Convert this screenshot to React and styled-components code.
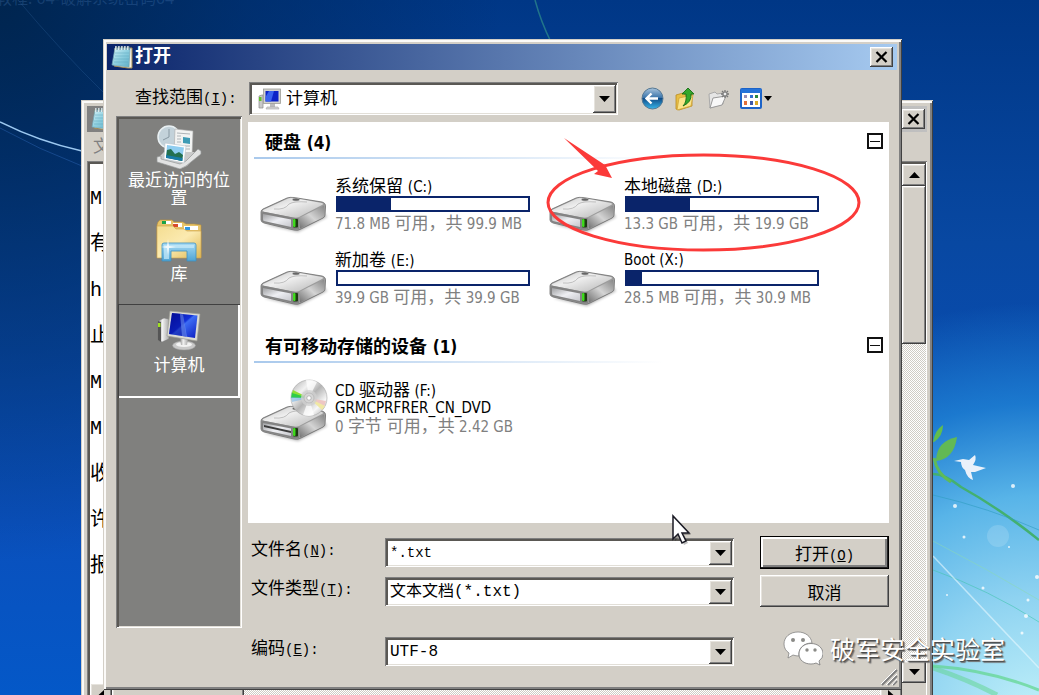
import React, { useState } from "react";
import styled, { createGlobalStyle, css } from "styled-components";

const GlobalStyle = createGlobalStyle`
  * {
    box-sizing: border-box;
  }
  body {
    margin: 0;
    font-family: "Liberation Mono", "Noto Sans CJK SC", monospace;
    font-size: 17px;
    color: #000;
  }
  button, input, select, textarea {
    font: inherit;
    color: inherit;
    margin: 0;
    padding: 0;
    border: 0;
    border-radius: 0;
    outline: none;
  }
`;

const raised = css`
  background: #d3cfc7;
  box-shadow: inset -1px -1px #404040, inset 1px 1px #fff,
    inset -2px -2px #808080, inset 2px 2px #e6e3dd;
`;

const sunken = css`
  box-shadow: inset 1px 1px #808080, inset -1px -1px #fff,
    inset 3px 3px #5a5854, inset -2px -2px #e2dfd8;
`;

const hatch = css`
  background: repeating-conic-gradient(#fff 0 25%, #cfccc4 0 50%) 0 0 / 2px 2px;
`;

const Desktop = styled.main`
  position: relative;
  height: 100vh;
  min-height: 695px;
  overflow: hidden;
  background: radial-gradient(
      ellipse 430px 420px at 100% 104%,
      #c4f3fa 0%,
      #8fd3f1 30%,
      #58b4e8 54%,
      rgba(32, 132, 214, 0.8) 76%,
      rgba(16, 100, 200, 0) 100%
    ),
    radial-gradient(
      ellipse 500px 560px at 0% 0%,
      #00254f 0%,
      rgba(0, 42, 96, 0.6) 50%,
      rgba(0, 60, 140, 0) 100%
    ),
    linear-gradient(180deg, #003786 0%, #0848a2 35%, #0a50bc 75%, #0458c8 100%);
`;

const Wallpaper = styled.svg`
  position: absolute;
  top: 0;
  ${(props) => (props.$right ? "right: 0;" : "left: 0;")}
`;

const FadedTitle = styled.div`
  position: absolute;
  left: -4px;
  top: -14px;
  font-size: 16px;
  line-height: 24px;
  font-family: "Noto Sans", "Noto Sans CJK SC", sans-serif;
  color: rgba(90, 140, 200, 0.25);
`;

const Frame = styled.section`
  position: absolute;
  display: flex;
  flex-direction: column;
  background: #d3cfc7;
  padding: 5px 5px 4px 4px;
  box-shadow: inset 1px 1px #d3cfc7, inset -1px -1px #404040,
    inset 3px 3px #fbfaf8, inset -3px -3px #808080;
`;

const NotepadFrame = styled(Frame)`
  left: 81px;
  right: 106px;
  top: 100px;
  bottom: -20px;
  padding: 6px;
`;

const DialogFrame = styled(Frame)`
  left: 103px;
  right: 137px;
  top: 39px;
`;

const TitleBar = styled.header`
  display: flex;
  align-items: center;
  height: 26px;
  padding: 0 ${(props) => (props.$inactive ? "2px" : "4px")} 0 4px;
  background: ${(props) =>
    props.$inactive
      ? "linear-gradient(90deg, #808080, #c0c0c0)"
      : "linear-gradient(90deg, #0a246a, #a6caf0)"};
`;

const Title = styled.h1`
  flex: 1;
  margin: 0 0 0 2px;
  color: #fff;
  font-size: 18px;
  line-height: 26px;
  font-weight: 700;
`;

const CloseButton = styled.button`
  ${raised}
  display: grid;
  place-items: center;
  width: 23px;
  height: 20px;
`;

const NotepadMenu = styled.nav`
  height: 29px;
  padding-left: 6px;
  line-height: 32px;
  color: #808080;
`;

const NotepadBody = styled.div`
  ${sunken}
  flex: 1;
  display: grid;
  grid-template-columns: 1fr 24px;
  grid-template-rows: 1fr 24px;
  padding: 3px 1px 2px 3px;
  background: #fff;
`;

const NotepadText = styled.textarea`
  resize: none;
  background: #fff;
  padding: 12px 0;
  font-size: 20px;
  line-height: 46px;
  overflow: hidden;
`;

const Scrollbar = styled.div`
  ${hatch}
  display: flex;
  flex-direction: ${(props) => (props.$vertical ? "column" : "row")};
`;

const ScrollButton = styled.button`
  ${raised}
  display: grid;
  place-items: center;
  flex: 0 0 22px;
`;

const ScrollThumb = styled.div`
  ${raised}
  flex: 0 0 ${(props) => props.$length};
`;

const ScrollTrack = styled.div`
  flex: 1;
`;

const Corner = styled.div`
  background: #d3cfc7;
`;

const Toolbar = styled.div`
  display: flex;
  align-items: center;
  height: 46px;
  padding: 11px 8px 0 28px;
`;

const LookInLabel = styled.label`
  flex: 0 0 114px;
  padding-bottom: 6px;
`;

const Latin = styled.span`
  font-size: 14px;
`;

const ComboBox = styled.div`
  ${sunken}
  display: flex;
  align-items: center;
  height: ${(props) => (props.$tall ? "33px" : "29px")};
  padding: 3px 2px 2px 5px;
  background: #fff;
`;

const LookInCombo = styled(ComboBox)`
  flex: 1;
  padding-left: 9px;
  gap: 5px;
`;

const comboText = css`
  flex: 1;
  min-width: 0;
  width: 100%;
  height: 100%;
  background: transparent;
  font-size: 16px;
`;

const ComboSelect = styled.select`
  ${comboText}
  appearance: none;
  font-size: ${(props) => (props.$tall ? "17px" : "16px")};
`;

const ComboInput = styled.input`
  ${comboText}
  font-size: 14px;
`;

const ComboArrow = styled.span`
  ${raised}
  display: grid;
  place-items: center;
  align-self: stretch;
  flex: 0 0 23px;
`;

const ToolGroup = styled.div`
  display: flex;
  align-items: center;
  gap: 9px;
  flex: 0 0 271px;
  padding-left: 23px;
`;

const ToolButton = styled.button`
  display: flex;
  align-items: center;
  gap: 2px;
  min-width: 24px;
  height: 26px;
  background: none;
`;

const DialogBody = styled.div`
  display: flex;
  align-items: flex-start;
  gap: 6px;
  padding: 0 8px 20px 9px;
`;

const Places = styled.nav`
  ${sunken}
  flex: 0 0 126px;
  height: 512px;
  padding: 3px 2px;
  background: #80807e;
`;

const Place = styled.button`
  display: flex;
  flex-direction: column;
  align-items: center;
  width: 100%;
  min-height: ${(props) => (props.$selected ? "94px" : "91px")};
  padding: 6px 8px 4px;
  background: none;
  color: #fff;
  line-height: 18px;
  ${(props) =>
    props.$selected &&
    css`
      box-shadow: inset 1px 1px #404040, inset -2px -2px #fff;
    `}
`;

const PlaceIcon = styled.span`
  height: 48px;
`;

const Main = styled.div`
  flex: 1;
  min-width: 0;
  padding-top: 6px;
`;

const FileList = styled.div`
  height: 401px;
  background: #fff;
  padding: 0 6px;
  font-family: "DejaVu Sans Condensed", "Noto Sans CJK SC", sans-serif;
`;

const GroupHeader = styled.div`
  display: flex;
  align-items: flex-start;
  justify-content: space-between;
  height: 37px;
  padding: 9px 0 0 11px;
  background: linear-gradient(90deg, #a9c9ec, #dce9f7 60%, #fff) 0 100% / 410px
    2px no-repeat;
`;

const GroupTitle = styled.h2`
  margin: 0;
  font-size: 18px;
  line-height: 24px;
  font-weight: 700;
`;

const Count = styled.span`
  font-size: 17px;
`;

const Toggle = styled.button`
  width: 16px;
  height: 16px;
  margin-top: 2px;
  border: 2px solid #111;
  background: linear-gradient(#111, #111) 50% 50% / 10px 1px no-repeat #fff;
`;

const DriveGrid = styled.div`
  display: grid;
  grid-template-columns: repeat(auto-fill, 289px);
  grid-auto-rows: 74px;
  padding: 18px 0 1px 6px;
`;

const Drive = styled.article`
  display: flex;
  gap: 9px;
`;

const DriveText = styled.div`
  font-size: 15px;
  line-height: 18px;
  white-space: nowrap;
`;

const Cjk = styled.span`
  font-size: 17px;
`;

const DriveLine = styled.div`
  height: 18px;
`;

const Free = styled(DriveLine)`
  color: #808080;
  margin-top: ${(props) => (props.$afterBar ? "2px" : "0")};
`;

const CapacityBar = styled.div`
  width: 194px;
  height: 16px;
  margin: 1px 0 0 1px;
  border: 2px solid #0a246a;
`;

const CapacityFill = styled.div`
  height: 100%;
  background: #0a246a;
`;

const Form = styled.form`
  display: grid;
  grid-template-columns: 134px 1fr 129px;
  grid-template-rows: 33px 32px 53px;
  row-gap: 6px;
  align-items: center;
  padding: 13px 0 0 3px;
`;

const Field = styled.div`
  display: contents;
`;

const FieldLabel = styled.label`
  padding-bottom: 3px;
  line-height: 26px;
  ${(props) => props.$apart && "align-self: end;"}
`;

const FieldCombo = styled(ComboBox)`
  margin-right: 26px;
  ${(props) => props.$apart && "align-self: end;"}
`;

const PushButton = styled.button`
  ${raised}
  align-self: stretch;
  ${(props) =>
    props.$default &&
    css`
      border: 1px solid #000;
      box-shadow: inset -1px -1px #222, inset 2px 2px #fff,
        inset -3px -3px #808080;
    `}
`;

const Grip = styled.svg`
  position: absolute;
  right: 4px;
  bottom: 4px;
`;

const Overlay = styled.svg`
  position: absolute;
  left: ${(props) => props.$left}px;
  top: ${(props) => props.$top}px;
  pointer-events: none;
`;

const Watermark = styled.div`
  position: absolute;
  right: 34px;
  top: 629px;
  display: flex;
  align-items: center;
  gap: 7px;
  color: #fff;
  font-family: "Noto Sans CJK SC", sans-serif;
  font-size: 25px;
  line-height: 38px;
  text-shadow: 1px 1px 1px #444, 2px 2px 1px #777;
`;

const Down = () => (
  <svg width="11" height="6" viewBox="0 0 11 6">
    <path d="M0 0H11L5.5 6Z" fill="#000" />
  </svg>
);

const Up = () => (
  <svg width="11" height="6" viewBox="0 0 11 6">
    <path d="M0 6H11L5.5 0Z" fill="#000" />
  </svg>
);

const Side = ({ left }) => (
  <svg width="6" height="11" viewBox="0 0 6 11">
    <path d={left ? "M6 0V11L0 5.5Z" : "M0 0V11L6 5.5Z"} fill="#000" />
  </svg>
);

const Cross = () => (
  <svg width="13" height="12" viewBox="0 0 13 12">
    <path d="M1.5 1L11.5 11M11.5 1L1.5 11" stroke="#000" strokeWidth="2.2" />
  </svg>
);

const NotepadIcon = () => (
  <svg width="22" height="24" viewBox="0 0 22 24">
    <defs>
      <linearGradient id="pad" x1="0" y1="0" x2="1" y2="1">
        <stop offset="0" stopColor="#d8f3f8" />
        <stop offset=".5" stopColor="#8fd0e0" />
        <stop offset="1" stopColor="#5eaec6" />
      </linearGradient>
    </defs>
    <path d="M4 3H21V23H17L3 21Z" fill="#f4f0e0" stroke="#a58b50" />
    <path d="M4 3H19L18 22L1 20Z" fill="url(#pad)" stroke="#6fa3b4" strokeWidth=".7" />
    <path d="M4 8H18M4 11H18M3 14H18M3 17H17" stroke="#5fa6bd" strokeWidth=".5" />
    <path d="M5 1V5M8 1V5M11 1V5M14 1V5M17 1V5" stroke="#e8eef0" strokeWidth="1.6" />
    <path d="M6 1V5M9 1V5M12 1V5M15 1V5M18 1V5" stroke="#456a78" strokeWidth=".7" />
  </svg>
);

const ComputerIcon = () => (
  <svg width="44" height="42" viewBox="0 0 44 42">
    <defs>
      <linearGradient id="screen" x1="0" y1="0" x2="1" y2="1">
        <stop offset="0" stopColor="#0512a0" />
        <stop offset=".45" stopColor="#1230d8" />
        <stop offset=".5" stopColor="#3d6cf4" />
        <stop offset="1" stopColor="#0b1cc0" />
      </linearGradient>
      <linearGradient id="metal" x1="0" y1="0" x2="1" y2="0">
        <stop offset="0" stopColor="#8c8c8c" />
        <stop offset=".4" stopColor="#f2f2f2" />
        <stop offset="1" stopColor="#a8a8a8" />
      </linearGradient>
    </defs>
    <path d="M1 11L7 8L12 9V29L5 32L1 30Z" fill="url(#metal)" stroke="#777" strokeWidth=".5" />
    <path d="M1 11L4 12V32L1 30Z" fill="#555" />
    <rect x="1" y="13" width="2.5" height="4" fill="#9fe020" />
    <ellipse cx="27" cy="35.5" rx="11.5" ry="4.5" fill="#c9c9c9" stroke="#9a9a9a" strokeWidth=".5" />
    <ellipse cx="27" cy="34.5" rx="8" ry="2.5" fill="#f2f2f2" />
    <path d="M23 27L31 29L30 35H24Z" fill="url(#metal)" />
    <path d="M13 1L43 4L40 31L10 26Z" fill="#dcdcd6" stroke="#9c9c94" strokeWidth=".7" />
    <path d="M15 3L40.5 5.5L38 28L12 24Z" fill="url(#screen)" />
    <path d="M15 3L26 4L29 26.5L12 24Z" fill="#02078c" opacity=".45" />
    <path d="M23 4L26 4.3L30 26.7L25 26Z" fill="#7ba4ff" opacity=".5" />
  </svg>
);

const SmallComputerIcon = () => (
  <svg width="23" height="22" viewBox="0 0 23 22">
    <path d="M1 8L4 7H5V20H1Z" fill="#c9c9c9" stroke="#8a8a8a" strokeWidth=".7" />
    <rect x="1" y="9" width="2.5" height="4" fill="#5fc02a" />
    <path d="M12 15H17V19H12Z" fill="#bdbdbd" />
    <path d="M9 19H20L21 21H8Z" fill="#d5d5d5" stroke="#a5a5a5" strokeWidth=".6" />
    <rect x="5.5" y="1" width="17" height="14.5" fill="#d2d2ce" stroke="#9d9d98" strokeWidth=".8" />
    <rect x="7.500" y="3" width="13" height="10.500" fill="#0d24c8" />
    <path d="M11 3H16L13 13.500H7.500V9Z" fill="#3a63ef" />
  </svg>
);

const RecentIcon = () => (
  <svg width="46" height="44" viewBox="0 0 46 44">
    <circle cx="13" cy="12" r="11" fill="#c3d2da" stroke="#e9f0f3" strokeWidth="1.5" />
    <path d="M13 4V12L7 15" stroke="#8798a2" fill="none" />
    <path d="M19 4L37 6L36 31L18 28Z" fill="#f2f3f2" stroke="#aaa" strokeWidth=".6" />
    <path d="M21 8L34 9M21 11H25M21 14H25M21 17H25M29 21H34M28 24H34" stroke="#aeb4b8" strokeWidth="1" />
    <path d="M27 12L34 13V19L27 18Z" fill="#3e9bb5" />
    <path d="M3 32L8 27L39 27L45 26L31 41L24 44L1 36Z" fill="#c9caca" />
    <path d="M1 32L5 31V34L24 39L30 36L42 24L45 26V29L30 41L24 44L1 37Z" fill="#e2e3e3" stroke="#949696" strokeWidth=".7" />
    <path d="M9 18L30 21L28 38L8 34Z" fill="#fff" stroke="#b8c5cc" strokeWidth=".6" />
    <path d="M11 20L28 22.5L26 36L10 32.5Z" fill="#8fcdf0" />
    <path d="M11 25L15 24L19 29L23 27L27 30L26 36L10 32.5Z" fill="#24704f" />
    <path d="M10 30L26.5 33V36L10 33Z" fill="#187ba5" />
  </svg>
);

const LibraryIcon = () => (
  <svg width="46" height="44" viewBox="0 0 46 44">
    <defs>
      <linearGradient id="folder" x1="0" y1="0" x2="1" y2="1">
        <stop offset="0" stopColor="#f4dd91" />
        <stop offset=".5" stopColor="#fbeab0" />
        <stop offset="1" stopColor="#dfb853" />
      </linearGradient>
      <linearGradient id="stand" x1="0" y1="0" x2="0" y2="1">
        <stop offset="0" stopColor="#a8dbf4" />
        <stop offset="1" stopColor="#4fa4d4" />
      </linearGradient>
    </defs>
    <path d="M2 3L4 1H16L18 3H27L30 5H38L45 6V38H1V6Z" fill="#e7c46a" stroke="#bc9238" strokeWidth=".6" />
    <path d="M6 2H15V5H6Z M17 4H26V8H17Z M28 7H42V11H28Z" fill="#fff" />
    <path d="M6 2H10V5H6Z" fill="#18a347" />
    <path d="M17 5H22V8H17Z" fill="#d94b2c" />
    <path d="M29 8H34V11H29Z" fill="#2f96e0" />
    <path d="M1 7H17L20 10H28L31 12H45V39H1Z" fill="url(#folder)" stroke="#cda34a" strokeWidth=".6" />
    <path d="M6 26Q6 24 8 24H38Q40 24 40 26V42H31V32H15V42H6Z" fill="url(#stand)" stroke="#3c8fbf" strokeWidth=".8" />
    <path d="M8 26H38V29H13V40H8Z" fill="#c9ebfa" opacity=".7" />
    <path d="M12 20L13 27L20 28L13 29L12 36L11 29L5 28L11 27Z" fill="#fff" opacity=".8" />
  </svg>
);

const DriveIcon = ({ disc }) => (
  <svg width="66" height="64" viewBox="0 0 66 64" overflow="visible">
    <defs>
      <linearGradient id="driveTop" x1="0" y1="0" x2="1" y2="1">
        <stop offset="0" stopColor="#c4c4c4" />
        <stop offset=".4" stopColor="#efefef" />
        <stop offset="1" stopColor="#b5b5b5" />
      </linearGradient>
      <linearGradient id="driveFront" x1="0" y1="0" x2="1" y2="1">
        <stop offset="0" stopColor="#9fa0a2" />
        <stop offset=".5" stopColor="#eeeff3" />
        <stop offset="1" stopColor="#c6c7cc" />
      </linearGradient>
      <linearGradient id="driveSide" x1="0" y1="1" x2="1" y2="0">
        <stop offset="0" stopColor="#6f6f6f" />
        <stop offset=".5" stopColor="#d4d4d4" />
        <stop offset="1" stopColor="#858585" />
      </linearGradient>
      <linearGradient id="discFace" x1="0" y1="0" x2="1" y2="1">
        <stop offset="0" stopColor="#a9a9a9" />
        <stop offset=".3" stopColor="#f2f2f2" />
        <stop offset=".5" stopColor="#b4b4b4" />
        <stop offset=".75" stopColor="#f7f7f7" />
        <stop offset="1" stopColor="#a0a0a0" />
      </linearGradient>
      <filter id="soft" x="-20%" y="-50%" width="140%" height="200%">
        <feGaussianBlur stdDeviation="1.5" />
      </filter>
    </defs>
    <g transform={disc ? "translate(0 21)" : "translate(0 16)"}>
      <path d="M4 31L38 39L67 24L64 20L30 30Z" fill="#000" opacity=".3" filter="url(#soft)" />
      <path d="M1 19Q1 17 3 16L27 5Q30 4 34 4.5L62 9Q66 10 65.5 14L65 22Q65 24 63 25L41 36Q38 38 34 37L4 30Q1 29 1 27Z" fill="#9c9c9c" stroke="#6d6d6d" strokeWidth=".8" />
      <path d="M3 17L28 5.5Q31 4.5 34 5L62 10Q64 11 62 12L39 24Q36 25 33 24.5L5 19Q2 18 3 17Z" fill="url(#driveTop)" />
      <path d="M39 25L64 12.5L64.5 22Q64.5 24 62 25L40 35.5Z" fill="url(#driveSide)" />
      <path d="M1.5 20Q2 18.5 5 19L33 24.5Q36 25 38.5 25L39 36Q36 37 33 36L4 29.5Q1.5 29 1.5 26Z" fill="#838383" />
      <path d="M3 21L31 26.5V34L4 28Q3 28 3 26Z" fill="url(#driveFront)" />
      <path d="M14 16Q25 17 29 11Q34 8 47 9" fill="none" stroke="#aaa" strokeWidth=".7" />
      <ellipse cx="36" cy="6.5" rx="3.5" ry="1.5" fill="#666" stroke="#bbb" strokeWidth=".6" />
      {disc && <path d="M4 23L31 29V31L4 25Z" fill="#3c3c3c" />}
      <rect x="33" y="26" width="5" height="8.5" rx="1" fill="#1e3a13" />
      <rect x="33" y="26" width="2.5" height="8" rx="1" fill="#3fdb1c" />
    </g>
    {disc && (
      <g>
        <circle cx="49" cy="17" r="18" fill="url(#discFace)" stroke="#a5a5a5" strokeWidth=".6" />
        <path d="M49 17L46 -1A18 18 0 0 1 57 1Z M49 17L43 34A18 18 0 0 0 54 34Z" fill="#fff" opacity=".75" />
        <path d="M49 17L32 11L31 17Z" fill="#30cc48" />
        <path d="M49 17L33 9L32 12Z" fill="#8ee034" />
        <path d="M49 17L31 16L32 21Z" fill="#78b5e8" opacity=".6" />
        <path d="M49 17L66 20L64 26Z" fill="#eec7c4" />
        <path d="M49 17L65 25L62 29Z" fill="#f0e8a4" />
        <circle cx="49" cy="17" r="8" fill="#d0d0d0" opacity=".8" />
        <circle cx="49" cy="17" r="5" fill="#d6d6d6" stroke="#b2b2b2" strokeWidth=".7" />
        <circle cx="49" cy="17" r="2.2" fill="#fff" stroke="#999" strokeWidth=".6" />
      </g>
    )}
  </svg>
);

const BackIcon = () => (
  <svg width="23" height="23" viewBox="0 0 23 23">
    <defs>
      <linearGradient id="ball" x1="0" y1="0" x2="0" y2="1">
        <stop offset="0" stopColor="#a9c4dc" />
        <stop offset=".45" stopColor="#3c76ac" />
        <stop offset=".5" stopColor="#104c88" />
        <stop offset="1" stopColor="#38b6ea" />
      </linearGradient>
    </defs>
    <circle cx="11.5" cy="11.5" r="10.5" fill="url(#ball)" stroke="#557893" />
    <path d="M10.500 6.500L5.500 11.500L10.500 16.500M6 11.500H17" fill="none" stroke="#fff" strokeWidth="2.400" />
  </svg>
);

const UpFolderIcon = () => (
  <svg width="22" height="24" viewBox="0 0 22 24">
    <path d="M2 8L9 6L11 8L18 7V19L5 23L2 22Z" fill="#e8bf45" stroke="#b98c22" strokeWidth=".8" />
    <path d="M5 11L19 8L17 19L3 23Z" fill="#fbe48a" stroke="#cfa338" strokeWidth=".8" />
    <path d="M9 19Q13 15 12 7H8L14 1L20 7H17Q18 15 9 19Z" fill="#35a82b" stroke="#176d16" strokeWidth=".9" />
  </svg>
);

const NewFolderIcon = () => (
  <svg width="24" height="22" viewBox="0 0 24 22">
    <path d="M2 6L8 4L10 6L16 5V16L3 20Z" fill="#e5e5e5" stroke="#aaa" />
    <path d="M6 10L19 8L15 17L3 20Z" fill="#f8f8f8" stroke="#999" />
    <path d="M18 2V10M14 6H22M15 3L21 9M21 3L15 9" stroke="#777" strokeWidth="1.300" />
    <circle cx="18" cy="6" r="2" fill="#eee" stroke="#777" />
  </svg>
);

const ViewsIcon = () => (
  <svg width="22" height="21" viewBox="0 0 22 21">
    <rect x="1" y="1" width="20" height="19" rx="1" fill="#fff" stroke="#1c63c8" strokeWidth="2" />
    <rect x="1" y="1" width="20" height="4" fill="#2473d8" />
    <path d="M4 7H7V10H4Z" fill="#9a8fb5" />
    <path d="M10 7H13V10H10Z" fill="#2f6fd0" />
    <path d="M15 7H18V10H15Z" fill="#2b8a3e" />
    <path d="M4 13H7V17H4Z" fill="#e2703a" />
    <path d="M10 13H13V17H10Z" fill="#3d58a8" />
    <path d="M15 13H18V17H15Z" fill="#d9a927" />
  </svg>
);

const drives = [
  { name: "系统保留", letter: "(C:)", used: 28, free: "71.8 MB", total: "99.9 MB" },
  { name: "本地磁盘", letter: "(D:)", used: 33, free: "13.3 GB", total: "19.9 GB" },
  { name: "新加卷", letter: "(E:)", used: 0, free: "39.9 GB", total: "39.9 GB" },
  { name: "", letter: "Boot (X:)", used: 8, free: "28.5 MB", total: "30.9 MB" },
];

const noteLines = ["M", "有", "h", "止", "M", "M", "收", "许", "报"].join("\n");

function DriveItem({ drive }) {
  return (
    <Drive>
      <DriveIcon />
      <DriveText>
        <DriveLine>
          {drive.name && <Cjk>{drive.name} </Cjk>}
          {drive.letter}
        </DriveLine>
        <CapacityBar>
          <CapacityFill style={{ width: `${drive.used}%` }} />
        </CapacityBar>
        <Free $afterBar>
          {drive.free} <Cjk>可用，共</Cjk> {drive.total}
        </Free>
      </DriveText>
    </Drive>
  );
}

function Group({ title, count, children }) {
  const [open, setOpen] = useState(true);

  return (
    <section>
      <GroupHeader>
        <GroupTitle>
          {title} <Count>({count})</Count>
        </GroupTitle>
        <Toggle aria-label={title} aria-expanded={open} onClick={() => setOpen(!open)} />
      </GroupHeader>
      {open && <DriveGrid>{children}</DriveGrid>}
    </section>
  );
}

function Notepad() {
  return (
    <NotepadFrame>
      <TitleBar $inactive>
        <NotepadIcon />
        <Title />
        <CloseButton aria-label="关闭">
          <Cross />
        </CloseButton>
      </TitleBar>
      <NotepadMenu>文件</NotepadMenu>
      <NotepadBody>
        <NotepadText aria-label="文本" defaultValue={noteLines} />
        <Scrollbar $vertical>
          <ScrollButton aria-label="向上">
            <Up />
          </ScrollButton>
          <ScrollThumb $length="158px" />
          <ScrollTrack />
          <ScrollButton aria-label="向下">
            <Down />
          </ScrollButton>
        </Scrollbar>
        <Scrollbar>
          <ScrollButton aria-label="向左">
            <Side left />
          </ScrollButton>
          <ScrollThumb $length="132px" />
          <ScrollTrack />
          <ScrollButton aria-label="向右">
            <Side />
          </ScrollButton>
        </Scrollbar>
        <Corner />
      </NotepadBody>
    </NotepadFrame>
  );
}

function OpenDialog() {
  const [fileName, setFileName] = useState("*.txt");

  return (
    <DialogFrame role="dialog" aria-label="打开">
      <TitleBar>
        <NotepadIcon />
        <Title>打开</Title>
        <CloseButton aria-label="关闭">
          <Cross />
        </CloseButton>
      </TitleBar>
      <Toolbar>
        <LookInLabel htmlFor="lookIn">
          查找范围
          <Latin>
            (<u>I</u>):
          </Latin>
        </LookInLabel>
        <LookInCombo $tall>
          <SmallComputerIcon />
          <ComboSelect $tall id="lookIn">
            <option>计算机</option>
          </ComboSelect>
          <ComboArrow>
            <Down />
          </ComboArrow>
        </LookInCombo>
        <ToolGroup>
          <ToolButton aria-label="后退">
            <BackIcon />
          </ToolButton>
          <ToolButton aria-label="向上一级">
            <UpFolderIcon />
          </ToolButton>
          <ToolButton aria-label="新建文件夹">
            <NewFolderIcon />
          </ToolButton>
          <ToolButton aria-label="查看">
            <ViewsIcon />
            <svg width="8" height="5" viewBox="0 0 8 5">
              <path d="M0 0H8L4 5Z" />
            </svg>
          </ToolButton>
        </ToolGroup>
      </Toolbar>
      <DialogBody>
        <Places>
          <Place>
            <PlaceIcon>
              <RecentIcon />
            </PlaceIcon>
            最近访问的位置
          </Place>
          <Place>
            <PlaceIcon>
              <LibraryIcon />
            </PlaceIcon>
            库
          </Place>
          <Place $selected>
            <PlaceIcon>
              <ComputerIcon />
            </PlaceIcon>
            计算机
          </Place>
        </Places>
        <Main>
          <FileList>
            <Group title="硬盘" count={4}>
              {drives.map((drive) => (
                <DriveItem key={drive.letter} drive={drive} />
              ))}
            </Group>
            <Group title="有可移动存储的设备" count={1}>
              <Drive>
                <DriveIcon disc />
                <DriveText>
                  <DriveLine>
                    CD <Cjk>驱动器</Cjk> (F:)
                  </DriveLine>
                  <DriveLine>GRMCPRFRER_CN_DVD</DriveLine>
                  <Free>
                    0 <Cjk>字节 可用，共</Cjk> 2.42 GB
                  </Free>
                </DriveText>
              </Drive>
            </Group>
          </FileList>
          <Form onSubmit={(e) => e.preventDefault()}>
            <Field>
              <FieldLabel htmlFor="fileName">
                文件名
                <Latin>
                  (<u>N</u>):
                </Latin>
              </FieldLabel>
              <FieldCombo>
                <ComboInput
                  id="fileName"
                  value={fileName}
                  onChange={(e) => setFileName(e.target.value)}
                />
                <ComboArrow>
                  <Down />
                </ComboArrow>
              </FieldCombo>
              <PushButton $default type="submit">
                打开
                <Latin>
                  (<u>O</u>)
                </Latin>
              </PushButton>
            </Field>
            <Field>
              <FieldLabel htmlFor="fileType">
                文件类型
                <Latin>
                  (<u>T</u>):
                </Latin>
              </FieldLabel>
              <FieldCombo>
                <ComboSelect id="fileType">
                  <option>文本文档(*.txt)</option>
                </ComboSelect>
                <ComboArrow>
                  <Down />
                </ComboArrow>
              </FieldCombo>
              <PushButton type="button">取消</PushButton>
            </Field>
            <Field>
              <FieldLabel $apart htmlFor="encoding">
                编码
                <Latin>
                  (<u>E</u>):
                </Latin>
              </FieldLabel>
              <FieldCombo $apart>
                <ComboSelect id="encoding">
                  <option>UTF-8</option>
                </ComboSelect>
                <ComboArrow>
                  <Down />
                </ComboArrow>
              </FieldCombo>
            </Field>
          </Form>
        </Main>
      </DialogBody>
      <Grip width="17" height="17" viewBox="0 0 17 17">
        <path d="M1 16L16 1M7 16L16 7M12 16L16 12" stroke="#808080" strokeWidth="2" />
        <path d="M0 15L15 0M5 16L16 5M11 16L16 10" stroke="#fff" strokeWidth="1" />
      </Grip>
    </DialogFrame>
  );
}

function App() {
  return (
    <>
      <GlobalStyle />
      <Desktop>
        <Wallpaper width="600" height="695" viewBox="0 0 600 695" fill="none">
          <path d="M0 122Q40 142 82 151" stroke="#9cc8f0" strokeWidth="1.5" />
          <path d="M0 128Q40 150 82 166" stroke="#2a62b0" opacity=".5" />
          <path d="M18 0Q60 50 103 92" stroke="#3a72b0" opacity=".25" />
          <path d="M535 0Q541 22 551 42" stroke="#2f8f8c" strokeWidth="1.5" opacity=".7" />
        </Wallpaper>
        <Wallpaper $right width="110" height="695" viewBox="0 0 110 695" fill="none">
          <path d="M4 474Q16 474 32 487Q70 508 110 540" stroke="#43b070" strokeWidth="2.5" />
          <path d="M5 458Q8 474 22 482" stroke="#5fbb58" strokeWidth="3" />
          <path d="M4 442Q6 430 14 425Q14 436 5 442Z" fill="#62bd4c" />
          <path d="M7 460Q8 441 28 437Q25 459 7 461Z" fill="#62b954" />
          <path d="M25 461L34 459L40 460L46 455Q48 459 44 465L57 468L46 472L42 472L44 480Q38 478 36 470Q32 467 32 462Z" fill="#eaf1fa" />
          <path d="M4 495Q60 508 110 530" stroke="#2e9cc0" opacity=".6" />
          <path d="M4 541Q60 570 110 600" stroke="#8cdcb0" opacity=".5" />
          <path d="M4 570Q60 590 110 622" stroke="#45c4b0" opacity=".6" />
          <path d="M4 556L110 668" stroke="#e8f8ff" strokeWidth="1.5" opacity=".6" />
          <path d="M4 666Q60 670 110 690" stroke="#5fd68c" strokeWidth="3" opacity=".7" />
          <path d="M4 668Q40 680 68 695" stroke="#5fd68c" strokeWidth="5" opacity=".5" />
          <circle cx="69" cy="536" r="11" fill="#fff" opacity=".15" />
          <g fill="#fff" opacity=".8">
            <circle cx="26" cy="506" r="2" />
            <circle cx="84" cy="486" r="2" />
            <circle cx="35" cy="537" r="1.5" />
            <circle cx="108" cy="577" r="2" />
            <circle cx="97" cy="616" r="2" />
            <circle cx="93" cy="633" r="1.5" />
            <circle cx="54" cy="588" r="1.5" />
            <circle cx="80" cy="547" r="1" />
            <circle cx="18" cy="595" r="1" />
            <circle cx="99" cy="600" r="1.5" />
          </g>
        </Wallpaper>
        <FadedTitle>教程: 04-破解系统密码04</FadedTitle>
        <Notepad />
        <OpenDialog />
        <Overlay $left={540} $top={130} width="330" height="130" viewBox="540 130 330 130">
          <ellipse cx="703.5" cy="202.5" rx="155.5" ry="47.5" fill="none" stroke="#fb3a39" strokeWidth="3" />
          <path d="M564 138L605 165L603 161L612 178L594 174L598 171Z" fill="#fb3a39" />
        </Overlay>
        <Overlay $left={671} $top={514} width="24" height="34" viewBox="0 0 24 34">
          <path d="M4 5V27L9 22L13 31L17 29L13 21H20Z" fill="#000" opacity=".25" />
          <path d="M2 2V25L7 20L11 29L15 27L11 19H18Z" fill="#fff" stroke="#1a1a24" strokeWidth="1.5" />
        </Overlay>
        <Watermark>
          <svg width="40" height="36" viewBox="0 0 40 36">
            <path d="M15 2C7 2 1 7 1 14C1 18 3 21 6 23L5 28L10 25Q13 26 16 26C15 18 21 13 29 13C28 6 22 2 15 2Z" fill="#fff" stroke="#777" strokeWidth=".7" />
            <path d="M28 13.5C21 13.5 16 18 16 24C16 30 21 34 28 34Q31 34 33 33L37 35L36 31Q40 28 40 24C40 18 35 13.5 28 13.5Z" fill="#fff" stroke="#777" strokeWidth=".8" />
            <g fill="#8a8a86">
              <circle cx="10" cy="10" r="2" />
              <circle cx="20" cy="10" r="2" />
              <circle cx="24" cy="20" r="1.7" />
              <circle cx="32" cy="20" r="1.7" />
            </g>
          </svg>
          破军安全实验室
        </Watermark>
      </Desktop>
    </>
  );
}

export default App;
